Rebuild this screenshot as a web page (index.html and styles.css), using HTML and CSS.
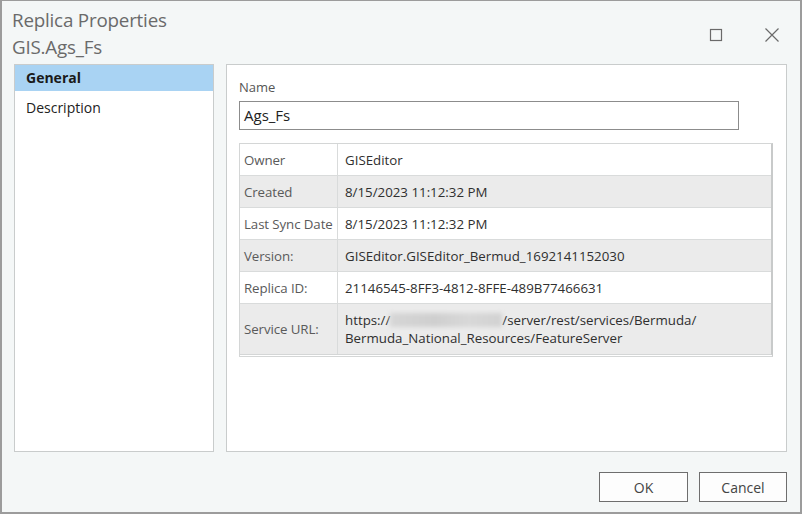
FILE: index.html
```html
<!DOCTYPE html>
<html>
<head>
<meta charset="utf-8">
<link rel="stylesheet" href="styles.css">
</head>
<body>
<div class="dialog">
  <div class="header">
    <div class="titles">
      <div class="title">Replica Properties</div>
      <div class="title">GIS.Ags_Fs</div>
    </div>
    <div class="controls">
      <svg class="ctl max" width="14" height="14" viewBox="0 0 14 14"><rect x="1.5" y="1.5" width="11" height="11" fill="none" stroke="#6a6a6a" stroke-width="1.2"/></svg>
      <svg class="ctl close" width="16" height="16" viewBox="0 0 16 16"><path d="M1.5 1.5 L14.5 14.5 M14.5 1.5 L1.5 14.5" stroke="#6a6a6a" stroke-width="1.2" fill="none"/></svg>
    </div>
  </div>
  <div class="body">
    <div class="nav">
      <div class="nav-item active">General</div>
      <div class="nav-item">Description</div>
    </div>
    <div class="main">
      <div class="field-label">Name</div>
      <div class="input">Ags_Fs</div>
      <div class="table">
        <div class="row"><div class="k">Owner</div><div class="v">GISEditor</div></div>
        <div class="row alt"><div class="k">Created</div><div class="v">8/15/2023 11:12:32 PM</div></div>
        <div class="row"><div class="k">Last Sync Date</div><div class="v">8/15/2023 11:12:32 PM</div></div>
        <div class="row alt"><div class="k">Version:</div><div class="v">GISEditor.GISEditor_Bermud_1692141152030</div></div>
        <div class="row"><div class="k">Replica ID:</div><div class="v">21146545-8FF3-4812-8FFE-489B77466631</div></div>
        <div class="row alt tall"><div class="k">Service URL:</div><div class="v"><div>https://<span class="blur"></span>/server/rest/services/Bermuda/</div><div>Bermuda_National_Resources/FeatureServer</div></div></div>
      </div>
    </div>
  </div>
  <div class="footer">
    <button class="btn">OK</button>
    <button class="btn">Cancel</button>
  </div>
</div>
</body>
</html>
```
FILE: styles.css
```css
html, body { margin: 0; padding: 0; }
body { font-family: "Open Sans", "Noto Sans", sans-serif; }
.dialog {
  width: 802px; height: 514px; box-sizing: border-box;
  border: 1px solid #9c9c9c; border-width: 1px 2px 2px 2px;
  background: #f4f7f7;
  display: flex; flex-direction: column;
}
.header { display: flex; justify-content: space-between; height: 62px; }
.titles { padding: 6px 0 0 10px; }
.title { font-size: 18.8px; line-height: 27px; color: #6a6a6a; letter-spacing: -0.2px; }
.controls { display: flex; align-items: flex-start; padding-top: 26px; padding-right: 20px; gap: 41px; }
.ctl.max { margin-top: 1px; }
.body { display: flex; gap: 12px; padding: 0 13px 0 12px; height: 388px; margin-top: 1px; }
.nav {
  width: 200px; box-sizing: border-box; background: #fff;
  border: 1px solid #c9cccc; padding: 0;
}
.nav-item { height: 28px; line-height: 27px; padding-left: 11px; font-size: 14px; color: #222; }
.nav-item.active { background: #a9d3f3; font-weight: 700; color: #1a1a1a; height: 26px; line-height: 26px; margin-bottom: 3px; }
.main {
  width: 561px; box-sizing: border-box; background: #fff;
  border: 1px solid #c9cccc; padding: 12px 12px;
}
.field-label { font-size: 13px; color: #555; line-height: 20px; margin-bottom: 4px; }
.input {
  width: 500px; height: 29px; box-sizing: border-box;
  border: 1px solid #8c8c8c; padding-left: 4px;
  font-size: 15px; line-height: 27px; color: #222;
}
.table {
  margin-top: 13px; width: 534px; box-sizing: border-box;
  border: 1px solid #d4d6d6; border-right: 2px solid #c8caca;
  border-bottom: 3px double #d4d6d6;
}
.row { display: flex; height: 31px; border-bottom: 1px solid #d9dbdb; font-size: 13.3px; }
.row:last-child { border-bottom: none; }
.row.alt { background: #ebebeb; }
.row.tall { height: 50px; }
.k { flex: none; border-right: 1px solid #d9dbdb; padding-left: 4px; color: #5a5a5a; display: flex; align-items: center; box-sizing: border-box; width: 98px; white-space: nowrap; letter-spacing: -0.1px; }
.v { padding-left: 7px; color: #2f2f2f; display: flex; flex-direction: column; justify-content: center; line-height: 18px; }
.blur {
  display: inline-block; width: 112px; height: 14px; vertical-align: -2px;
  background: linear-gradient(90deg, #d6d6d6, #cfcfcf 40%, #d8d8d8 70%, #d2d2d2);
  filter: blur(2px);
}
.footer { display: flex; justify-content: flex-end; gap: 11px; padding: 20px 13px 0 0; }
.btn {
  width: 89px; height: 30px; box-sizing: border-box;
  border: 1px solid #6e6e6e; background: #fdfdfd;
  font-family: "Open Sans", "Noto Sans", sans-serif; font-size: 14px; color: #444;
  padding: 0;
}
.btn + .btn { width: 88px; }
```
